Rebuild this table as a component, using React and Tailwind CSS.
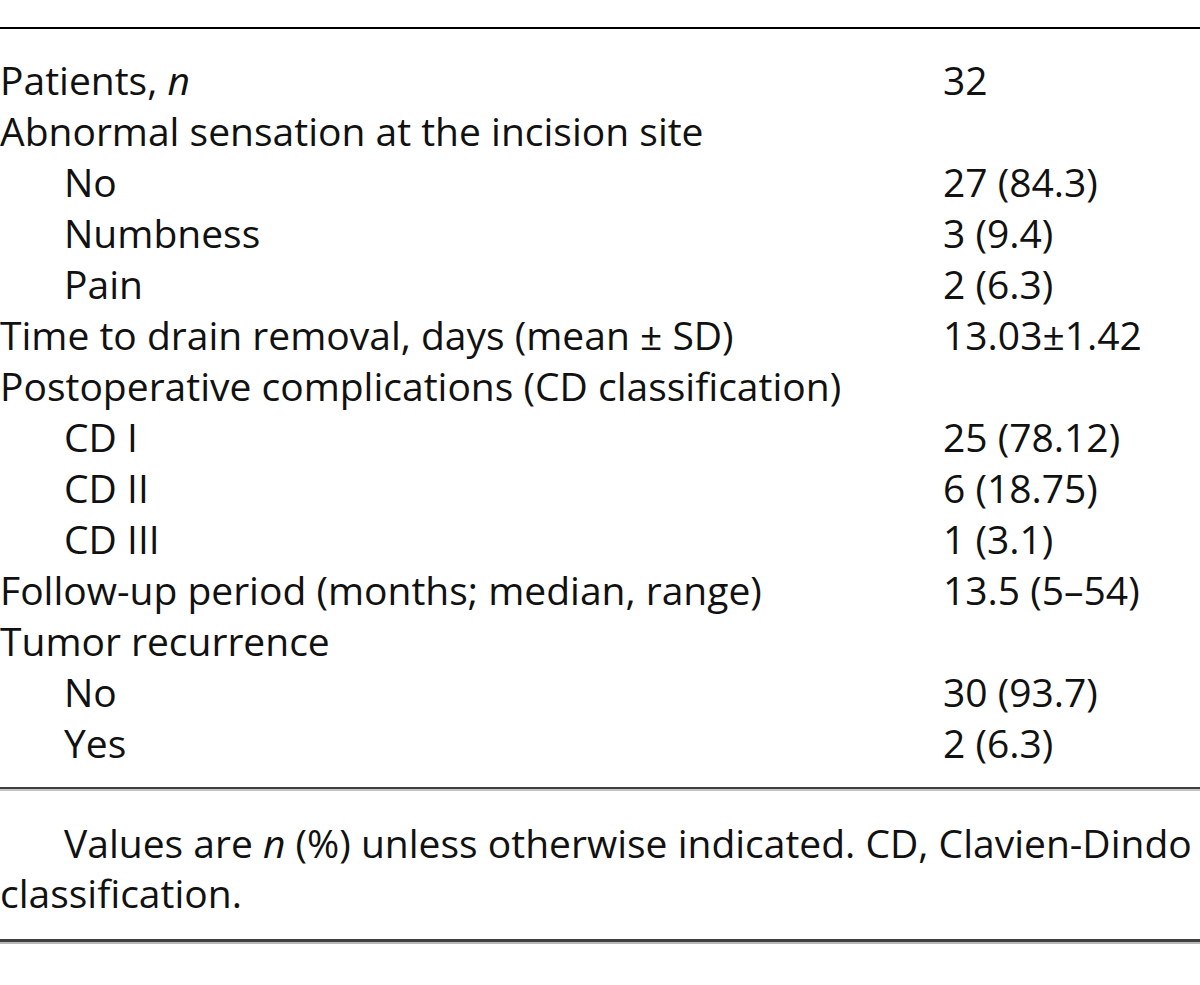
import React from "react";

const rows = [
  { label: <>Patients, <i>n</i></>, value: "32" },
  { label: "Abnormal sensation at the incision site", value: "" },
  { label: "No", value: "27 (84.3)", sub: true },
  { label: "Numbness", value: "3 (9.4)", sub: true },
  { label: "Pain", value: "2 (6.3)", sub: true },
  { label: "Time to drain removal, days (mean ± SD)", value: "13.03±1.42" },
  { label: "Postoperative complications (CD classification)", value: "" },
  { label: "CD I", value: "25 (78.12)", sub: true },
  { label: "CD II", value: "6 (18.75)", sub: true },
  { label: "CD III", value: "1 (3.1)", sub: true },
  { label: "Follow-up period (months; median, range)", value: "13.5 (5–54)" },
  { label: "Tumor recurrence", value: "" },
  { label: "No", value: "30 (93.7)", sub: true },
  { label: "Yes", value: "2 (6.3)", sub: true },
];

export default function App() {
  return (
    <div className="w-[1200px] h-[985px] bg-white overflow-hidden text-[#111] font-['Open_Sans',sans-serif] text-[39px]">
      <div className="mt-[27px] border-t-2 border-black pt-[25px] pb-[19px]">
        {rows.map((r, i) => (
          <div key={i} className="grid grid-cols-[943px_1fr] h-[51px] items-center leading-[51px] whitespace-nowrap">
            <div className={r.sub ? "pl-[64px]" : ""}>{r.label}</div>
            <div>{r.value}</div>
          </div>
        ))}
      </div>

      <div className="border-t-2 border-[#3f3f3f]" />
      <div className="h-[2px] bg-[#c4c4c4]" />

      {/* Footnote */}
      <div className="pt-[27px] pb-[21px] leading-[50px] whitespace-nowrap">
        <div className="pl-[64px]">
          Values are <i>n</i> (%) unless otherwise indicated. CD, Clavien-Dindo
        </div>
        <div>classification.</div>
      </div>

      <div className="border-t-[3px] border-[#3f3f3f]" />
      <div className="h-[2px] bg-[#b8b8b8]" />
    </div>
  );
}
